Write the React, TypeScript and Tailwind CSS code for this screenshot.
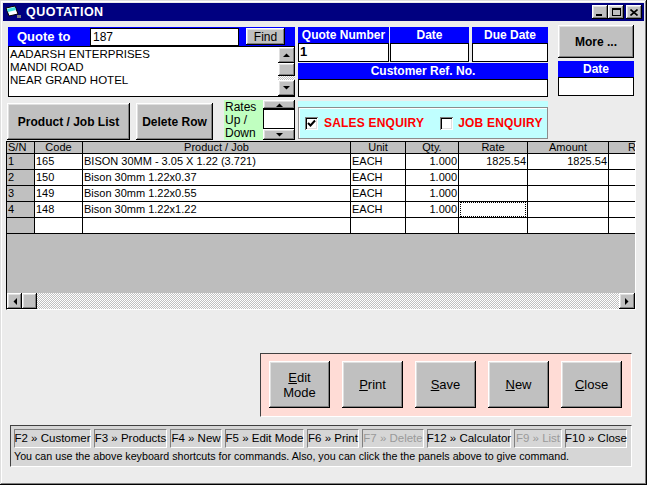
import React from 'react'

const RAISED = 'shadow-[inset_-1px_-1px_0_#000000,inset_1px_1px_0_#ffffff,inset_-2px_-2px_0_#808080,inset_2px_2px_0_#dfdfdf]'
const SUNKEN = 'shadow-[inset_1px_1px_0_#808080,inset_-1px_-1px_0_#ffffff,inset_2px_2px_0_#000000,inset_-2px_-2px_0_#dfdfdf]'
const DITHER = 'bg-[repeating-conic-gradient(#c0c0c0_0%_25%,#ffffff_0%_50%)] bg-[length:2px_2px]'

function Arrow({ dir }: { dir: 'up' | 'down' | 'left' | 'right' }) {
  const pts = {
    up: '0,4 7,4 3.5,0.5',
    down: '0,0 7,0 3.5,3.5',
    left: '4,0 4,7 0.5,3.5',
    right: '0,0 0,7 3.5,3.5',
  }[dir]
  const horiz = dir === 'left' || dir === 'right'
  return (
    <svg width={horiz ? 4 : 7} height={horiz ? 7 : 4} viewBox={horiz ? '0 0 4 7' : '0 0 7 4'}>
      <polygon points={pts} fill="#000" />
    </svg>
  )
}

function ScrollBtn({ dir, className = '' }: { dir: 'up' | 'down' | 'left' | 'right'; className?: string }) {
  return (
    <div className={`bg-[#c0c0c0] flex items-center justify-center ${RAISED} ${className}`}>
      <Arrow dir={dir} />
    </div>
  )
}

function Check({ on }: { on: boolean }) {
  return (
    <div className={`w-[13px] h-[13px] shrink-0 bg-white flex items-center justify-center ${SUNKEN}`}>
      {on && (
        <svg width="9" height="9" viewBox="0 0 9 9">
          <polyline points="1,4 3.5,6.5 8,1.5" fill="none" stroke="#000" strokeWidth="2" />
        </svg>
      )}
    </div>
  )
}

const COLS = [28, 48, 268, 55, 53, 69, 81, 60]
const HEAD = ['S/N', 'Code', 'Product / Job', 'Unit', 'Qty.', 'Rate', 'Amount', 'R']
const ROWS = [
  ['1', '165', 'BISON 30MM - 3.05 X 1.22 (3.721)', 'EACH', '1.000', '1825.54', '1825.54', ''],
  ['2', '150', 'Bison 30mm 1.22x0.37', 'EACH', '1.000', '', '', ''],
  ['3', '149', 'Bison 30mm 1.22x0.55', 'EACH', '1.000', '', '', ''],
  ['4', '148', 'Bison 30mm 1.22x1.22', 'EACH', '1.000', '', '', ''],
  ['', '', '', '', '', '', '', ''],
]
const RIGHT = [4, 5, 6]

const KEYS: { t: string; w: string; off?: boolean }[] = [
  { t: 'F2 » Customer', w: 'w-[77px]' },
  { t: 'F3 » Products', w: 'w-[73px]' },
  { t: 'F4 » New', w: 'w-[52px]' },
  { t: 'F5 » Edit Mode', w: 'w-[79px]' },
  { t: 'F6 » Print', w: 'w-[52px]' },
  { t: 'F7 » Delete', w: 'w-[62px]', off: true },
  { t: 'F12 » Calculator', w: 'w-[84px]' },
  { t: 'F9 » List', w: 'w-[48px]', off: true },
  { t: 'F10 » Close', w: 'w-[62px]' },
]

function BigBtn({ first, rest, second }: { first: string; rest: string; second?: string }) {
  return (
    <div className={`w-[61px] h-[47px] bg-[#c0c0c0] flex flex-col items-center justify-center text-[13px] leading-[15px] text-black ${RAISED}`}>
      <div><span className="underline">{first}</span>{rest}</div>
      {second && <div>{second}</div>}
    </div>
  )
}

export default function App() {
  return (
    <div className="w-[647px] h-[485px] bg-[#ececec] font-['Liberation_Sans',Arial,sans-serif] text-black overflow-hidden shadow-[inset_-1px_-1px_0_#000000,inset_1px_1px_0_#dfdfdf,inset_-2px_-2px_0_#808080,inset_2px_2px_0_#ffffff] p-[3px] flex flex-col">
      {/* title bar */}
      <div className="h-[18px] bg-[#000080] flex items-center pl-[2px] pr-[2px] shrink-0">
        <svg width="17" height="14" viewBox="0 0 17 14">
          <polygon points="1,3 10,1 13,9 4,11" fill="#ffffff" stroke="#000" strokeWidth="1" />
          <polygon points="2,4 10,2 11,5 3,7" fill="#40e0e0" />
          <rect x="12" y="10" width="4" height="3" fill="#808080" />
        </svg>
        <span className="ml-[4px] text-white font-bold text-[12.5px] tracking-[0.5px]">QUOTATION</span>
        <div className="ml-auto flex items-center">
          <div className={`w-[16px] h-[14px] bg-[#c0c0c0] flex items-end justify-center pb-[3px] ${RAISED}`}>
            <div className="w-[6px] h-[2px] bg-black -ml-[2px]" />
          </div>
          <div className={`w-[16px] h-[14px] bg-[#c0c0c0] flex items-center justify-center ${RAISED}`}>
            <div className="w-[9px] h-[8px] border border-black border-t-2 -mt-[1px]" />
          </div>
          <div className={`ml-[2px] w-[16px] h-[14px] bg-[#c0c0c0] flex items-center justify-center ${RAISED}`}>
            <svg width="8" height="7" viewBox="0 0 8 7">
              <path d="M0.5 0.5 L7.5 6.5 M7.5 0.5 L0.5 6.5" stroke="#000" strokeWidth="1.6" />
            </svg>
          </div>
        </div>
      </div>

      {/* body */}
      <div className="flex-1 flex flex-col pl-[3px] pt-[4px]">
        {/* row A */}
        <div className="h-[73px] flex items-start shrink-0">
          <div className="ml-[2px] mt-[2px] w-[287px] flex flex-col">
            <div className="h-[19px] bg-[#0000ff] flex items-center">
              <span className="ml-[9px] w-[73px] text-white font-bold text-[13px]">Quote to</span>
              <div className="w-[149px] h-[18px] bg-white border border-black flex items-center pl-[2px] text-[12px]">187</div>
              <div className={`ml-[7px] w-[39px] h-[17px] bg-[#c0c0c0] flex items-center justify-center text-[12px] ${RAISED}`}>Find</div>
            </div>
            <div className="h-[51px] flex border border-black border-r-0">
              <div className="flex-1 bg-white pl-[1px] pt-[1px] text-[11.5px] leading-[13px]">
                <div>AADARSH ENTERPRISES</div>
                <div>MANDI ROAD</div>
                <div>NEAR GRAND HOTEL</div>
              </div>
              <div className="w-[17px] flex flex-col">
                <ScrollBtn dir="up" className="h-[16px]" />
                <div className={`h-[13px] bg-[#c0c0c0] ${RAISED}`} />
                <div className={`flex-1 ${DITHER}`} />
                <ScrollBtn dir="down" className="h-[16px]" />
              </div>
            </div>
          </div>

          <div className="ml-[3px] mt-[2px] w-[250px] flex flex-col">
            <div className="flex">
              {[
                ['Quote Number', 'w-[91px]', '1'],
                ['Date', 'w-[79px] ml-[1px]', ''],
                ['Due Date', 'w-[76px] ml-[3px]', ''],
              ].map(([l, w, v]) => (
                <div key={l} className={`${w} flex flex-col`}>
                  <div className="h-[16px] bg-[#0000ff] text-white font-bold text-[12px] leading-[16px] text-center">{l}</div>
                  <div className="h-[19px] bg-white border border-black text-[13px] font-bold leading-[15px] pl-[1px]">{v}</div>
                </div>
              ))}
            </div>
            <div className="mt-[1px] h-[16px] bg-[#0000ff] text-white font-bold text-[12px] leading-[16px] text-center">Customer Ref. No.</div>
            <div className="h-[18px] bg-white border border-black" />
          </div>

          <div className="ml-[10px] w-[76px] flex flex-col">
            <div className={`h-[33px] bg-[#c0c0c0] flex items-center justify-center font-bold text-[12px] ${RAISED}`}>More ...</div>
            <div className="mt-[3px] h-[16px] bg-[#0000ff] text-white font-bold text-[12px] leading-[16px] text-center">Date</div>
            <div className="h-[19px] bg-white border border-black" />
          </div>
        </div>

        {/* row B */}
        <div className="h-[43px] flex items-start shrink-0">
          <div className={`ml-[1px] mt-[5px] w-[123px] h-[37px] bg-[#c0c0c0] flex items-center justify-center font-bold text-[12px] ${RAISED}`}>Product / Job List</div>
          <div className={`ml-[6px] mt-[5px] w-[77px] h-[37px] bg-[#c0c0c0] flex items-center justify-center font-bold text-[12px] ${RAISED}`}>Delete Row</div>
          <div className="ml-[11px] mt-[2px] w-[39px] h-[40px] bg-[#c0ffc0] text-[12px] leading-[13px] pl-[1px] pt-[1px]">
            <div>Rates</div>
            <div>Up /</div>
            <div>Down</div>
          </div>
          <div className="mt-[2px] w-[32px] h-[40px] flex flex-col">
            <ScrollBtn dir="up" className="h-[9px]" />
            <div className="h-[20px] bg-white border border-black" />
            <ScrollBtn dir="down" className="h-[11px]" />
          </div>
          <div className="ml-[3px] mt-[3px] w-[250px] h-[38px] bg-[#c0ffff] pt-[6px]">
            <div className="h-[32px] border border-[#8c8c8c] shadow-[inset_1px_1px_0_#ffffff] flex items-center pl-[6px] whitespace-nowrap overflow-hidden">
              <Check on />
              <span className="ml-[6px] text-[#ff0000] font-bold text-[12px] tracking-[0.2px]">SALES ENQUIRY</span>
              <div className="ml-[16px]"><Check on={false} /></div>
              <span className="ml-[5px] text-[#ff0000] font-bold text-[12px] tracking-[0.2px]">JOB ENQUIRY</span>
            </div>
          </div>
        </div>

        {/* grid */}
        <div className="w-[630px] h-[169px] border border-black border-b-[#ffffff] border-r-[#ffffff] flex flex-col shrink-0 bg-[#bdbdbd]">
          <div className="overflow-hidden">
            <div className="flex h-[12px] text-[11px] leading-[11px]">
              {HEAD.map((h, i) => (
                <div key={i} style={{ width: COLS[i] }} className={`shrink-0 bg-[#c0c0c0] border-r border-b border-black ${i === 0 ? 'text-left pl-[1px]' : i === 7 ? 'text-left pl-[19px]' : 'text-center'}`}>{h}</div>
              ))}
            </div>
            {ROWS.map((r, ri) => (
              <div key={ri} className="flex h-[16px] text-[11px] leading-[15px]">
                {r.map((c, i) => (
                  <div
                    key={i}
                    style={{ width: COLS[i] }}
                    className={`shrink-0 border-r border-b border-black px-[1px] ${i === 0 ? 'bg-[#c0c0c0]' : 'bg-white'} ${RIGHT.includes(i) ? 'text-right' : ''}`}
                  >
                    {ri === 3 && i === 5 ? <div className="h-full border border-dotted border-black" /> : c}
                  </div>
                ))}
              </div>
            ))}
          </div>
          <div className="flex-1" />
          <div className="h-[16px] flex">
            <ScrollBtn dir="left" className="w-[15px]" />
            <div className={`w-[15px] bg-[#c0c0c0] ${RAISED}`} />
            <div className={`flex-1 ${DITHER}`} />
            <ScrollBtn dir="right" className="w-[16px]" />
          </div>
        </div>

        {/* command panel */}
        <div className="ml-[254px] mt-[43px] w-[372px] h-[64px] bg-[#ffdcd6] border border-[#404040] border-b-white border-r-white flex items-start pl-[8px] pt-[7px] gap-[12px] shrink-0">
          <BigBtn first="E" rest="dit" second="Mode" />
          <BigBtn first="P" rest="rint" />
          <BigBtn first="S" rest="ave" />
          <BigBtn first="N" rest="ew" />
          <BigBtn first="C" rest="lose" />
        </div>

        {/* status */}
        <div className="ml-[4px] mt-[8px] w-[622px] h-[42px] bg-[#d6d6d6] border border-[#404040] border-b-white border-r-white pl-[3px] pt-[3px] shrink-0">
          <div className="flex gap-[3px]">
            {KEYS.map(k => (
              <div
                key={k.t}
                className={`${k.w} h-[19px] border border-[#808080] border-b-white border-r-white flex items-center justify-center text-[11.5px] whitespace-nowrap ${k.off ? 'text-[#9a9a9a]' : 'text-black'}`}
              >
                {k.t}
              </div>
            ))}
          </div>
          <div className="h-[17px] text-[10.7px] leading-[17px] whitespace-nowrap">You can use the above keyboard shortcuts for commands. Also, you can click the the panels above to give command.</div>
        </div>
      </div>
    </div>
  )
}
